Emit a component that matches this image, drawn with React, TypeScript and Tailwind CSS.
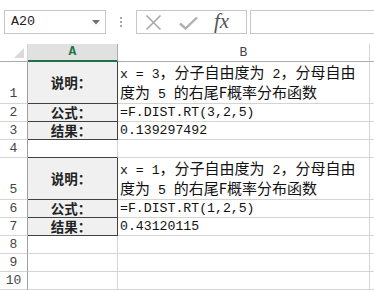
import React from "react";

const MONO = { fontFamily: '"Liberation Mono", "DejaVu Sans Mono", monospace' } as React.CSSProperties;

function C({ children }: { children: React.ReactNode }) {
  return <span className="text-[15px] font-['Noto_Sans_CJK_SC',sans-serif]">{children}</span>;
}

function RowHead({ n, tall }: { n: number; tall?: boolean }) {
  return (
    <div className="border-r border-b border-r-[#a0a0a0] border-b-[#d4d4d4] flex items-end justify-center text-[13px] leading-[16px] text-[#444] font-['Liberation_Mono',monospace]">
      <span className={tall ? "pb-[1px]" : ""}>{n}</span>
    </div>
  );
}

function ACell({ label, boxed, darkBottom }: { label?: string; boxed?: boolean; darkBottom?: boolean }) {
  const cls = [
    "border-r border-b flex items-center justify-center pr-[3px]",
    boxed ? "bg-[#f0f0f0] border-r-[#404040] border-b-[#404040]" : "border-r-[#d4d4d4]",
    !boxed && darkBottom ? "border-b-[#404040]" : "",
    !boxed && !darkBottom ? "border-b-[#d4d4d4]" : "",
  ].join(" ");
  return (
    <div className={cls}>
      {label && (
        <span className="text-[13.5px] leading-[13px] font-bold text-[#222] font-['Noto_Sans_CJK_SC',sans-serif]">{label}</span>
      )}
    </div>
  );
}

function BCell({ children }: { children?: React.ReactNode }) {
  return (
    <div className="border-r border-b border-r-[#d4d4d4] border-b-[#d4d4d4] flex items-center pl-[2px] text-[13.2px] leading-[17px] text-[#111] font-['Liberation_Mono',monospace] whitespace-nowrap overflow-hidden">
      <div>{children}</div>
    </div>
  );
}

function CCell() {
  return <div className="border-b border-b-[#d4d4d4]" />;
}

export default function App() {
  return (
    <div className="w-[374px] h-[290px] bg-white overflow-hidden">
      {/* formula bar */}
      <div className="h-[44px] flex items-start pt-[10px] pl-[4px]">
        <div className="w-[102px] h-[24px] border border-[#c6c6c6] flex items-center justify-between pl-[6px] pr-[5px]">
          <span className="text-[13.3px] text-[#222]" style={MONO}>A20</span>
          <svg width="8" height="5" viewBox="0 0 8 5">
            <polygon points="0,0 8,0 4,4.5" fill="#707070" />
          </svg>
        </div>
        <div className="w-[30px] h-[24px] flex flex-col items-center justify-center gap-[2px]">
          <div className="w-[2px] h-[2px] bg-[#a8a8a8]" />
          <div className="w-[2px] h-[2px] bg-[#a8a8a8]" />
          <div className="w-[2px] h-[2px] bg-[#a8a8a8]" />
        </div>
        <div className="w-[111px] h-[24px] border border-[#c6c6c6] flex items-center pl-[8px]">
          <svg width="17" height="17" viewBox="0 0 17 17">
            <path d="M1.5 1.5 L15.5 15.5 M15.5 1.5 L1.5 15.5" stroke="#a8a8a8" strokeWidth="1.6" />
          </svg>
          <svg width="19" height="14" viewBox="0 0 19 14" className="ml-[17px] mt-[1px]">
            <path d="M1 7.5 L6.5 12.5 L18 1.5" stroke="#b0b0b0" strokeWidth="2.4" fill="none" />
          </svg>
          <span className="ml-[16px] text-[21px] leading-[20px] italic text-[#555] font-['Liberation_Serif',serif] pb-[2px]">fx</span>
        </div>
        <div className="flex-1 ml-[3px] h-[24px] border-y border-l border-[#c6c6c6]" />
      </div>

      {/* grid */}
      <div className="grid grid-cols-[28px_90px_252px_1fr] grid-rows-[18px_42px_18px_18px_18px_42px_18px_18px_18px_18px_18px]">
        {/* header row */}
        <div className="border-r border-b border-r-[#d4d4d4] border-b-[#ababab] flex items-end justify-end pr-[3px] pb-[3px]">
          <svg width="10" height="10" viewBox="0 0 10 10">
            <polygon points="10,0 10,10 0,10" fill="#dadada" />
          </svg>
        </div>
        <div className="bg-[#e1e1e1] border-r border-r-[#ababab] border-b-2 border-b-[#217346] flex items-center justify-center text-[13px] leading-[14px] font-bold text-[#217346]" style={MONO}>
          A
        </div>
        <div className="border-r border-b border-r-[#d4d4d4] border-b-[#ababab] flex items-center justify-center text-[13px] leading-[14px] text-[#444]" style={MONO}>
          B
        </div>
        <div className="border-b border-b-[#ababab]" />

        {/* row 1 */}
        <RowHead n={1} tall />
        <ACell label="说明：" boxed />
        <BCell>
          x = 3<C>，分子自由度为</C> 2<C>，分母自由</C>
          <br />
          <C>度为</C> 5 <C>的右尾F概率分布函数</C>
        </BCell>
        <CCell />

        {/* row 2 */}
        <RowHead n={2} />
        <ACell label="公式：" boxed />
        <BCell>=F.DIST.RT(3,2,5)</BCell>
        <CCell />

        {/* row 3 */}
        <RowHead n={3} />
        <ACell label="结果：" boxed />
        <BCell>0.139297492</BCell>
        <CCell />

        {/* row 4 */}
        <RowHead n={4} />
        <ACell darkBottom />
        <BCell />
        <CCell />

        {/* row 5 */}
        <RowHead n={5} tall />
        <ACell label="说明：" boxed />
        <BCell>
          x = 1<C>，分子自由度为</C> 2<C>，分母自由</C>
          <br />
          <C>度为</C> 5 <C>的右尾F概率分布函数</C>
        </BCell>
        <CCell />

        {/* row 6 */}
        <RowHead n={6} />
        <ACell label="公式：" boxed />
        <BCell>=F.DIST.RT(1,2,5)</BCell>
        <CCell />

        {/* row 7 */}
        <RowHead n={7} />
        <ACell label="结果：" boxed />
        <BCell>0.43120115</BCell>
        <CCell />

        {/* rows 8-10 */}
        <RowHead n={8} />
        <ACell />
        <BCell />
        <CCell />
        <RowHead n={9} />
        <ACell />
        <BCell />
        <CCell />
        <RowHead n={10} />
        <ACell />
        <BCell />
        <CCell />
      </div>
    </div>
  );
}
